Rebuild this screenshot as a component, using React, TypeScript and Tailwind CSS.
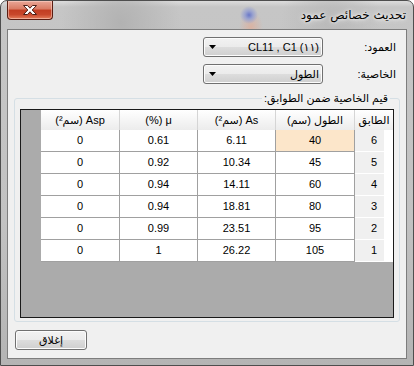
import React from 'react';

type Row = { floor: string; len: string; as: string; mu: string; asp: string };

const rows: Row[] = [
  { floor: '6', len: '40', as: '6.11', mu: '0.61', asp: '0' },
  { floor: '5', len: '45', as: '10.34', mu: '0.92', asp: '0' },
  { floor: '4', len: '60', as: '14.11', mu: '0.94', asp: '0' },
  { floor: '3', len: '80', as: '18.81', mu: '0.94', asp: '0' },
  { floor: '2', len: '95', as: '23.51', mu: '0.99', asp: '0' },
  { floor: '1', len: '105', as: '26.22', mu: '1', asp: '0' },
];

const btnBg =
  'border border-[#707070] rounded-[3px] bg-[linear-gradient(to_bottom,#f2f2f2_0%,#ebebeb_50%,#dddddd_50%,#cfcfcf_100%)] shadow-[inset_0_0_0_1px_#fcfcfc]';

const Combo: React.FC<{ children: React.ReactNode }> = ({ children }) => (
  <div className={`flex h-[20px] w-[120px] items-center pr-[3px] pl-[5px] ${btnBg}`}>
    <span className="flex-1 text-right leading-none">{children}</span>
    <svg width="7" height="4" viewBox="0 0 7 4" className="shrink-0">
      <polygon points="0,0 7,0 3.5,4" fill="#000" />
    </svg>
  </div>
);

const CloseGlyph = () => (
  <svg width="14" height="10" viewBox="0 0 14 10">
    <polygon
      points="0.5,0.5 4.5,0.5 7,3.2 9.5,0.5 13.5,0.5 9.2,5 13.5,9.5 9.5,9.5 7,6.8 4.5,9.5 0.5,9.5 4.8,5"
      fill="#fff"
      stroke="#4b1f17"
      strokeWidth="1"
      strokeLinejoin="round"
    />
  </svg>
);

export default function App() {
  const headCell =
    'flex h-[20px] items-center justify-center border-r border-[#d5d5d5] bg-linear-to-b from-white to-[#ececec]';
  const dataCell = 'flex h-[22px] items-center justify-center border-r border-b border-[#a0a0a0]';

  return (
    <div className="h-[366px] w-[414px] bg-white font-['Liberation_Sans','DejaVu_Sans',sans-serif] text-[11px] text-black">
      <div className="flex h-full w-full flex-col rounded-t-[7px] border border-[#4e4e4e] bg-[radial-gradient(circle_at_248px_14px,#6a78c8_0px,#9aa3cf_4px,transparent_9px),radial-gradient(ellipse_at_250px_26px,#d9b3a3_0px,transparent_12px),radial-gradient(ellipse_at_120px_22px,#b2b2b2_0px,transparent_60px),radial-gradient(ellipse_at_330px_20px,#b9b9b9_0px,transparent_50px),linear-gradient(to_bottom,#dcdcdc_0px,#c6c6c6_6px,#c2c2c2_60%,#b4b4b4_100%)]">
        {/* title bar */}
        <div className="flex h-[28px] items-start justify-between">
          <div className="ml-[6px] flex h-[19px] w-[46px] items-center justify-center rounded-b-[4px] border border-t-0 border-[#5a1d12] bg-[linear-gradient(to_bottom,#e9a797_0%,#d97a63_45%,#c23d22_50%,#c8472b_75%,#e57e5c_100%)] shadow-[inset_0_0_0_1px_rgba(255,220,210,0.5)]">
            <CloseGlyph />
          </div>
          <div
            dir="rtl"
            className="mr-[7px] pt-[7px] font-['DejaVu_Sans',sans-serif] text-[12px] leading-[14px] [text-shadow:0_0_6px_#fff,0_0_3px_#fff]"
          >
            تحديث خصائص عمود
          </div>
        </div>

        {/* client area */}
        <div dir="rtl" className="mx-[6px] mb-[6px] flex flex-1 flex-col border border-[#7d7d7d] bg-[#f0f0f0]">
          <div className="mt-[7px] flex items-center">
            <div className="w-[83px] pr-[10px]">العمود:</div>
            <Combo>
              <span dir="ltr" className="[unicode-bidi:isolate]">CL11 , C1 (١١)</span>
            </Combo>
          </div>
          <div className="mt-[7px] flex items-center">
            <div className="w-[83px] pr-[10px]">الخاصية:</div>
            <Combo>الطول</Combo>
          </div>

          <fieldset className="mx-[6px] mt-[8px] rounded-[3px] border border-[#d5dfe5] px-[5px] pb-[3px]">
            <legend className="mr-[4px] px-[2px] leading-[13px]">قيم الخاصية ضمن الطوابق:</legend>
            <div className="mt-[4px] flex h-[209px] w-[374px] flex-col border border-[#1a1a1a] bg-[#ababab]">
              <div className="flex">
                <div className="flex h-[20px] w-[38px] items-center justify-center bg-linear-to-b from-white to-[#ececec]">
                  الطابق
                </div>
                <div className={`${headCell} w-[79px]`}>الطول (سم)</div>
                <div className={`${headCell} w-[78px]`}>As (سم²)</div>
                <div className={`${headCell} w-[78px]`}>μ (%)</div>
                <div className={`${headCell} w-[79px]`}>Asp (سم²)</div>
              </div>
              {rows.map((r, i) => (
                <div key={r.floor} className="flex">
                  <div className="flex h-[22px] w-[38px] items-center justify-center border-b border-white bg-[linear-gradient(to_left,#ffffff_9px,#f0f0f0_9px)]">
                    {r.floor}
                  </div>
                  <div className={`${dataCell} w-[79px] ${i === 0 ? 'bg-[#fce6ca]' : 'bg-white'}`}>{r.len}</div>
                  <div className={`${dataCell} w-[78px] bg-white`}>{r.as}</div>
                  <div className={`${dataCell} w-[78px] bg-white`}>{r.mu}</div>
                  <div className={`${dataCell} w-[79px] bg-white`}>{r.asp}</div>
                </div>
              ))}
            </div>
          </fieldset>

          <button
            className={`mt-[8px] ml-[7px] flex h-[20px] w-[72px] items-center justify-center self-end ${btnBg}`}
          >
            إغلاق
          </button>
        </div>
      </div>
    </div>
  );
}
